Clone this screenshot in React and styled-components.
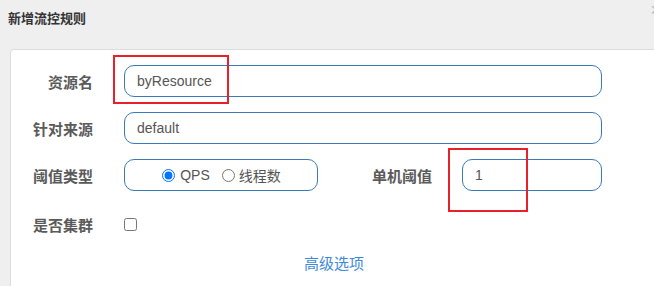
import React from "react";
import styled, { createGlobalStyle } from "styled-components";

const GlobalStyle = createGlobalStyle`
  html, body { margin: 0; padding: 0; }
  body {
    font-family: "Liberation Sans", "Noto Sans CJK SC", sans-serif;
    background: #efefef;
  }
`;

const Page = styled.div`
  position: relative;
  width: 654px;
  height: 286px;
  overflow: hidden;
  background: #efefef;
`;

const Header = styled.div`
  display: flex;
  justify-content: space-between;
  align-items: flex-start;
  height: 49px;
  box-sizing: border-box;
  padding: 9px 0 0 8px;
`;

const Title = styled.div`
  font-family: "Noto Sans CJK SC", sans-serif;
  font-size: 13px;
  line-height: 18px;
  font-weight: 700;
  color: #333;
`;

const Close = styled.span`
  font-family: "Liberation Sans", sans-serif;
  font-size: 18px;
  line-height: 1;
  color: #b5b5b5;
  margin-right: -7px;
  margin-top: -8px;
`;

const Card = styled.div`
  margin-left: 10px;
  margin-right: -4px;
  background: #fff;
  border: 1px solid #dcdcdc;
  border-radius: 4px;
  padding: 15px 0 30px;
`;

const Row = styled.div`
  display: flex;
  align-items: center;
  height: 32px;
  margin-bottom: ${(p) => p.$gap ?? 15}px;
`;

const Label = styled.label`
  flex-shrink: 0;
  box-sizing: border-box;
  width: ${(p) => (p.$width ? `${p.$width}px` : "auto")};
  margin-left: ${(p) => p.$ml ?? 0}px;
  margin-right: ${(p) => p.$mr ?? 31}px;
  text-align: right;
  font-family: "Noto Sans CJK SC", sans-serif;
  font-size: 15px;
  font-weight: 700;
  color: #5a5a5a;
`;

const TextInput = styled.input`
  box-sizing: border-box;
  width: ${(p) => p.$width}px;
  height: 32px;
  padding: 0 12px;
  border: 1px solid #3a7ab8;
  border-radius: 10px;
  background: #fff;
  outline: none;
  font-family: "Liberation Sans", sans-serif;
  font-size: 14px;
  color: #555;
`;

const RadioBox = styled.div`
  box-sizing: border-box;
  width: 194px;
  height: 32px;
  display: flex;
  align-items: center;
  justify-content: center;
  border: 1px solid #3a7ab8;
  border-radius: 10px;
  padding-left: 1px;
`;

const RadioOption = styled.label`
  display: flex;
  align-items: center;
  gap: ${(p) => p.$gap ?? 4}px;
  margin-left: ${(p) => p.$ml ?? 0}px;
  font-family: "Liberation Sans", "Noto Sans CJK SC", sans-serif;
  font-size: 14px;
  color: #555;
`;

const Radio = styled.input`
  width: 13px;
  height: 13px;
  margin: 0;
`;

const Checkbox = styled.input`
  width: 13px;
  height: 13px;
  margin: 0;
`;

const LinkRow = styled.div`
  display: flex;
  justify-content: center;
`;

const Link = styled.a`
  font-family: "Noto Sans CJK SC", sans-serif;
  font-size: 15px;
  color: #3d8ad6;
  text-decoration: none;
  cursor: pointer;
`;

const Marker = styled.div`
  position: absolute;
  left: ${(p) => p.$x}px;
  top: ${(p) => p.$y}px;
  width: ${(p) => p.$w}px;
  height: ${(p) => p.$h}px;
  box-sizing: border-box;
  border: 2px solid #e8202a;
  pointer-events: none;
`;

export default function App() {
  return (
    <Page>
      <GlobalStyle />
      <Header>
        <Title>新增流控规则</Title>
        <Close>×</Close>
      </Header>
      <Card>
        <Row>
          <Label $width={82}>资源名</Label>
          <TextInput $width={478} defaultValue="byResource" />
        </Row>
        <Row>
          <Label $width={82}>针对来源</Label>
          <TextInput $width={478} defaultValue="default" />
        </Row>
        <Row $gap={17}>
          <Label $width={82}>阈值类型</Label>
          <RadioBox>
            <RadioOption $gap={5}>
              <Radio type="radio" name="grade" defaultChecked />
              QPS
            </RadioOption>
            <RadioOption $ml={12}>
              <Radio type="radio" name="grade" />
              线程数
            </RadioOption>
          </RadioBox>
          <Label $ml={54} $mr={30}>单机阈值</Label>
          <TextInput $width={140} defaultValue="1" />
        </Row>
        <Row $gap={12}>
          <Label $width={82}>是否集群</Label>
          <Checkbox type="checkbox" />
        </Row>
        <LinkRow>
          <Link>高级选项</Link>
        </LinkRow>
      </Card>
      <Marker $x={113} $y={55} $w={116} $h={49} />
      <Marker $x={448} $y={148} $w={80} $h={64} />
    </Page>
  );
}
